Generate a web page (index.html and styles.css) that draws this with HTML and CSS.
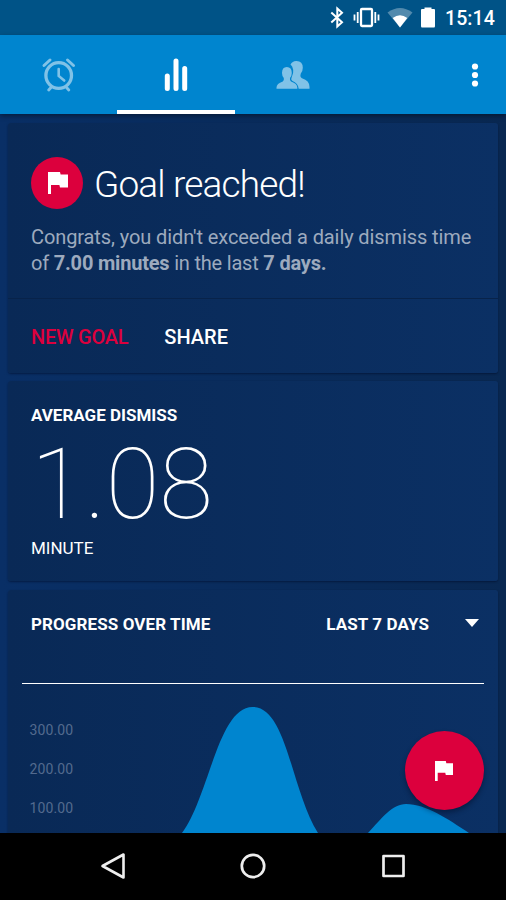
FILE: index.html
```html
<!DOCTYPE html>
<html lang="en">
<head>
<meta charset="utf-8">
<title>Statistics</title>
<link rel="stylesheet" href="styles.css">
</head>
<body>
<div class="phone">
  <header class="status">
    <svg class="status-icons" width="130" height="35" viewBox="326 0 130 35">
      <path d="M331.300 12.500 342 22.300l-4.700 4.200V8.500L342 12.700l-10.700 9.800" fill="none" stroke="#fff" stroke-width="2"/>
      <rect x="361" y="9" width="11" height="17" rx="1" fill="none" stroke="#fff" stroke-width="2.300"/>
      <path d="M357.700 12v11M354.500 14.500v6M375.300 12v11M378.500 14.500v6" stroke="#fff" stroke-width="1.800"/>
      <path d="M387.500 12.500Q400 3.500 412.500 12.500L400 27.500Z" fill="#fff" opacity=".32"/>
      <path d="M392.700 18Q400 12.500 407.300 18L400 27.500Z" fill="#fff"/>
      <path d="M424.500 7.500h7v1.500h2.500q1 0 1 1v16q0 1.500-1 1.500h-12q-1 0-1-1.500v-16q0-1 1-1h2.500z" fill="#fff"/>
    </svg>
    <span class="clock">15:14</span>
  </header>
  <nav class="tabs">
    <div class="tab">
      <svg width="36" height="36" viewBox="41 56.500 36 36" fill="none" stroke="#80c2e7" stroke-linecap="round">
        <circle cx="58.700" cy="75" r="12.800" stroke-width="3.300"/>
        <path d="M58.700 68.500v7l5.500 4.500" stroke-width="2.600"/>
        <path d="M44 65l6-5.500M73.500 65l-6-5.500" stroke-width="3"/>
        <path d="M51 87l-2.300 2.500M66.500 87l2.300 2.500" stroke-width="2.900"/>
      </svg>
    </div>
    <div class="tab active">
      <svg width="24" height="36" viewBox="164 57 24 36" stroke="#fff" stroke-width="5" stroke-linecap="round">
        <path d="M167.300 76v12.500M176 61v27.500M184.700 68.500v20"/>
      </svg>
    </div>
    <div class="tab">
      <svg width="36" height="36" viewBox="275 57 36 36" fill="#80c2e7">
        <path d="M290.500 64.500q2-3.800 6-3.600 6.300 0 6.300 6.800 0 3.500-2 5.800-1.200 3.600 1.200 4.800 7.500 2.300 7.500 8.700v1.800h-10.800q-.5-5.500-6.500-8-1.800-1.300-.5-3.500 2-4 1.500-7.500-.7-4-2.700-5.300z"/>
        <path d="M286.800 67q5 0 5 6 0 3-1.800 5-.5 2.800 1 3.500 6.300 2 6.300 6v1.300h-20.800v-1.300q0-4 6.300-6 1.500-.7 1-3.500-1.800-2-1.800-5 0-6 4.800-6z"/>
      </svg>
    </div>
    <div class="more">
      <svg width="8" height="26" viewBox="0 0 8 26" fill="#fff"><circle cx="4" cy="4.500" r="3.100"/><circle cx="4" cy="13" r="3.100"/><circle cx="4" cy="21.500" r="3.100"/></svg>
    </div>
  </nav>
  <main class="content">
    <section class="card goal">
      <div class="goal-body">
        <div class="goal-head">
          <span class="badge"><svg width="20" height="22" viewBox="0 0 20 22" fill="#fff"><path d="M0 0h12l.6 2.400H20V15.500h-8l-.6-2.500H3V22H0z"/></svg></span>
          <h1>Goal reached!</h1>
        </div>
        <p class="copy"><span class="first">Congrats, you didn't exceeded a daily dismiss time</span><br><span class="second">of <b>7.00 minutes</b> in the last <b>7 days.</b></span></p>
      </div>
      <div class="actions"><span class="new">NEW GOAL</span><span class="share">SHARE</span></div>
    </section>
    <section class="card average">
      <h2>AVERAGE DISMISS</h2>
      <div class="figure">1.08</div>
      <div class="unit">MINUTE</div>
    </section>
    <section class="card progress">
      <div class="progress-head">
        <h2>PROGRESS OVER TIME</h2>
        <span class="range">LAST 7 DAYS</span>
        <svg class="caret" width="14" height="8" viewBox="0 0 14 8"><path d="M0 0h14L7 8z" fill="#fff"/></svg>
      </div>
      <div class="chart">
        <div class="scale"><span>300.00</span><span>200.00</span><span>100.00</span></div>
        <svg class="curve" width="310" height="149" viewBox="170 684 310 149" fill="#0085cf">
          <path d="M182 833C209 797 218 707 252.500 707S291 790 318 833Z"/>
          <path d="M368 833C382 818 392 804 406 804C426 804 448 819 469 833Z"/>
        </svg>
      </div>
    </section>
  </main>
  <button class="fab" aria-label="New goal"><svg width="18" height="20" viewBox="0 0 20 22" fill="#fff"><path d="M0 0h12l.6 2.400H20V15.500h-8l-.6-2.500H3V22H0z"/></svg></button>
  <footer class="navbar">
    <svg width="28" height="28" viewBox="0 0 28 28" fill="none" stroke="#eee" stroke-width="2.600" stroke-linejoin="round"><path d="M24.500 2.500v23L3.500 14z"/></svg>
    <svg width="28" height="28" viewBox="0 0 28 28" fill="none" stroke="#eee" stroke-width="2.700"><circle cx="14" cy="14" r="11.200"/></svg>
    <svg width="28" height="28" viewBox="0 0 28 28" fill="none" stroke="#eee" stroke-width="2.700" stroke-linejoin="round"><path d="M4.500 4h20v20h-20z"/></svg>
  </footer>
</div>
</body>
</html>
```
FILE: styles.css
```css
* { box-sizing: border-box; }
body { margin: 0; font-family: Roboto, sans-serif; color: #fff; background: #000; }
svg { display: block; flex: none; }
.phone { position: relative; width: 506px; height: 900px; overflow: hidden; display: flex; flex-direction: column; background: linear-gradient(90deg, #092f66, #092852); }
.status { height: 35px; flex: none; background: #005387; display: flex; justify-content: flex-end; align-items: center; }
.clock { width: 50px; margin-left: -11px; margin-right: 11px; font-size: 19.5px; font-weight: 500; letter-spacing: .1px; line-height: 35px; padding-top: 2px; white-space: nowrap; }
.tabs { height: 79px; flex: none; background: #0085cf; display: flex; box-shadow: 0 2px 5px rgba(0,0,0,.4); z-index: 1; }
.tab { width: 117px; display: flex; align-items: center; justify-content: center; border-bottom: 0 solid #fff; }
.tab.active { width: 118px; margin-right: -1px; padding-top: 5px; border-bottom-width: 4.500px; }
.more { margin-left: auto; padding: 27px 27px 0 0; }
.content { height: 719px; flex: none; overflow: hidden; padding: 9px 8px 0; display: flex; flex-direction: column; gap: 8px; }
.card { flex: none; background: linear-gradient(90deg, #092956, #0b3064); border-radius: 3px; box-shadow: 0 1px 2px rgba(0,10,35,.5); white-space: nowrap; }
h1, h2, p { margin: 0; }
.goal { height: 250px; }
.goal-body { height: 176px; padding: 34px 23px 0; border-bottom: 1px solid #08234a; }
.goal-head { display: flex; align-items: center; gap: 11px; height: 52px; }
.badge { width: 52px; height: 52px; border-radius: 50%; background: #dc003d; display: flex; align-items: center; justify-content: center; padding-left: 2px; }
h1 { font-size: 37px; font-weight: 300; letter-spacing: -.85px; line-height: 52px; padding-top: 3px; }
.copy { margin-top: 15px; font-size: 20px; line-height: 26px; color: #9daabe; }
.first { letter-spacing: -.1px; }
.second { letter-spacing: -.2px; }
b { font-weight: 700; }
.actions { display: flex; gap: 36px; padding: 25px 23px; font-size: 20px; line-height: 26px; font-weight: 500; }
.new { color: #dc003d; letter-spacing: -.25px; }
.average { height: 200px; margin-bottom: 1px; padding: 23px 23px 0; }
h2, .range { font-size: 17px; font-weight: 700; line-height: 22px; }
.figure { font-size: 98px; font-weight: 100; line-height: 100px; height: 100px; margin: 9px 0 0; }
.unit { font-size: 17px; line-height: 22px; margin-top: 2px; }
.progress { height: 260px; }
.progress-head { height: 94px; margin: 0 14px; padding: 23px 5px 0 9px; border-bottom: 1px solid #fff; display: flex; }
.progress h2, .range { letter-spacing: .1px; }
.range { margin-left: auto; }
.caret { margin: 6px 0 0 36px; }
.chart { display: flex; height: 149px; }
.scale { width: 162px; padding: 36px 0 0 21.500px; display: flex; flex-direction: column; gap: 19px; font-size: 14px; letter-spacing: .1px; line-height: 20px; color: #536a8e; }
.fab { position: absolute; left: 405px; top: 731px; width: 79px; height: 79px; padding: 0 1px 0 0; border: 0; border-radius: 50%; background: #dc003d; display: flex; align-items: center; justify-content: center; box-shadow: 0 3px 5px rgba(0,10,35,.45); z-index: 2; }
.navbar { height: 67px; background: #000; display: flex; justify-content: center; align-items: center; gap: 112px; z-index: 1; padding-bottom: 1px; }
```
